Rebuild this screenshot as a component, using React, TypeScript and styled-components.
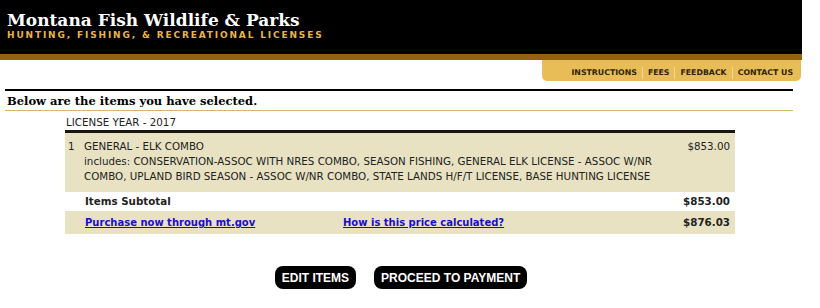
import styled, { createGlobalStyle } from "styled-components";

const GlobalStyle = createGlobalStyle`
  body {
    margin: 0;
    background: #ffffff;
    font-family: "DejaVu Sans", Verdana, sans-serif;
  }
`;

const Page = styled.div`
  width: 802px;
`;

const Header = styled.div`
  height: 44px;
  background-color: #000000;
  padding: 10px 0 0 7px;
  border-bottom: 6px solid #93610f;
`;

const SiteTitle = styled.h1`
  margin: 0;
  font-family: "DejaVu Serif", Georgia, serif;
  font-weight: bold;
  font-size: 17px;
  line-height: 20px;
  color: #ffffff;
`;

const SubTitle = styled.div`
  font-family: "DejaVu Sans", Verdana, sans-serif;
  font-weight: bold;
  font-size: 9px;
  letter-spacing: 1.85px;
  line-height: 11px;
  color: #e8b44a;
`;

const NavRow = styled.div`
  display: flex;
  justify-content: flex-end;
  padding-right: 1px;
`;

const NavTab = styled.nav`
  display: flex;
  align-items: flex-start;
  box-sizing: border-box;
  height: 21px;
  padding: 7px 3px 0 24px;
  background-color: #e8bd58;
  border-radius: 0 0 5px 5px;
`;

const NavLink = styled.a<{ $first?: boolean }>`
  font-size: 7.8px;
  font-weight: bold;
  color: #2e2305;
  text-decoration: none;
  padding: 0 5px;
  border-left: ${(p) => (p.$first ? "none" : "1px solid #f3d998")};
  line-height: 12px;
`;

const SectionTitle = styled.h2`
  margin: 8px 9px 0 5px;
  border-top: 2px solid #000000;
  border-bottom: 1px solid #dcb46a;
  padding: 3px 2px 2px;
  font-family: "DejaVu Serif", Georgia, serif;
  font-weight: bold;
  font-size: 11.5px;
  line-height: 14px;
  color: #000000;
`;

const Cart = styled.div`
  margin: 5px 0 0 65px;
  width: 670px;
  font-size: 10.3px;
  color: #222222;
`;

const YearLabel = styled.div`
  line-height: 13px;
  padding-left: 1px;
  padding-bottom: 1px;
`;

const Row = styled.div<{ $shaded?: boolean; $bold?: boolean; $tight?: boolean }>`
  display: flex;
  justify-content: space-between;
  align-items: flex-start;
  background-color: ${(p) => (p.$shaded ? "#e8e2c3" : "transparent")};
  font-weight: ${(p) => (p.$bold ? "bold" : "normal")};
  padding: ${(p) => (p.$tight ? "3px" : "5px")} 5px;
  padding-left: 20px;
  line-height: 13px;
`;

const ItemRow = styled(Row)`
  border-top: 3px solid #1a1510;
  padding: 6px 5px 8px 3px;
  line-height: 15px;
`;

const ItemNumber = styled.span`
  width: 16px;
  flex-shrink: 0;
`;

const ItemBody = styled.div`
  flex: 1;
`;

const Includes = styled.div`
  width: 580px;
`;

const Price = styled.span`
  white-space: nowrap;
  padding-left: 10px;
`;

const LinkCell = styled.div`
  display: flex;
  flex: 1;
  font-size: 10px;
`;

const BlueLink = styled.a<{ $width?: number }>`
  color: #1a0dcc;
  font-weight: bold;
  text-decoration: underline;
  width: ${(p) => (p.$width ? `${p.$width}px` : "auto")};
`;

const Actions = styled.div`
  display: flex;
  justify-content: center;
  gap: 18px;
  margin-top: 32px;
`;

const PillButton = styled.button`
  height: 23px;
  padding: 0 7px;
  border: none;
  border-radius: 8px;
  background-color: #000000;
  color: #ffffff;
  font-family: "Liberation Sans", Arial, sans-serif;
  font-weight: bold;
  font-size: 12px;
  cursor: pointer;
`;

const navItems = ["INSTRUCTIONS", "FEES", "FEEDBACK", "CONTACT US"];

export default function App() {
  return (
    <Page>
      <GlobalStyle />
      <Header>
        <SiteTitle>Montana Fish Wildlife &amp; Parks</SiteTitle>
        <SubTitle>HUNTING, FISHING, &amp; RECREATIONAL LICENSES</SubTitle>
      </Header>
      <NavRow>
        <NavTab>
          {navItems.map((item, i) => (
            <NavLink key={item} $first={i === 0} href="#">
              {item}
            </NavLink>
          ))}
        </NavTab>
      </NavRow>
      <SectionTitle>Below are the items you have selected.</SectionTitle>
      <Cart>
        <YearLabel>LICENSE YEAR - 2017</YearLabel>
        <ItemRow $shaded>
          <ItemNumber>1</ItemNumber>
          <ItemBody>
            <div>GENERAL - ELK COMBO</div>
            <Includes>
              includes: CONSERVATION-ASSOC WITH NRES COMBO, SEASON FISHING,
              GENERAL ELK LICENSE - ASSOC W/NR COMBO, UPLAND BIRD SEASON - ASSOC
              W/NR COMBO, STATE LANDS H/F/T LICENSE, BASE HUNTING LICENSE
            </Includes>
          </ItemBody>
          <Price>$853.00</Price>
        </ItemRow>
        <Row $bold $tight>
          <span>Items Subtotal</span>
          <Price>$853.00</Price>
        </Row>
        <Row $shaded $bold>
          <LinkCell>
            <BlueLink href="#" $width={258}>
              Purchase now through mt.gov
            </BlueLink>
            <BlueLink href="#">How is this price calculated?</BlueLink>
          </LinkCell>
          <Price>$876.03</Price>
        </Row>
      </Cart>
      <Actions>
        <PillButton>EDIT ITEMS</PillButton>
        <PillButton>PROCEED TO PAYMENT</PillButton>
      </Actions>
    </Page>
  );
}
